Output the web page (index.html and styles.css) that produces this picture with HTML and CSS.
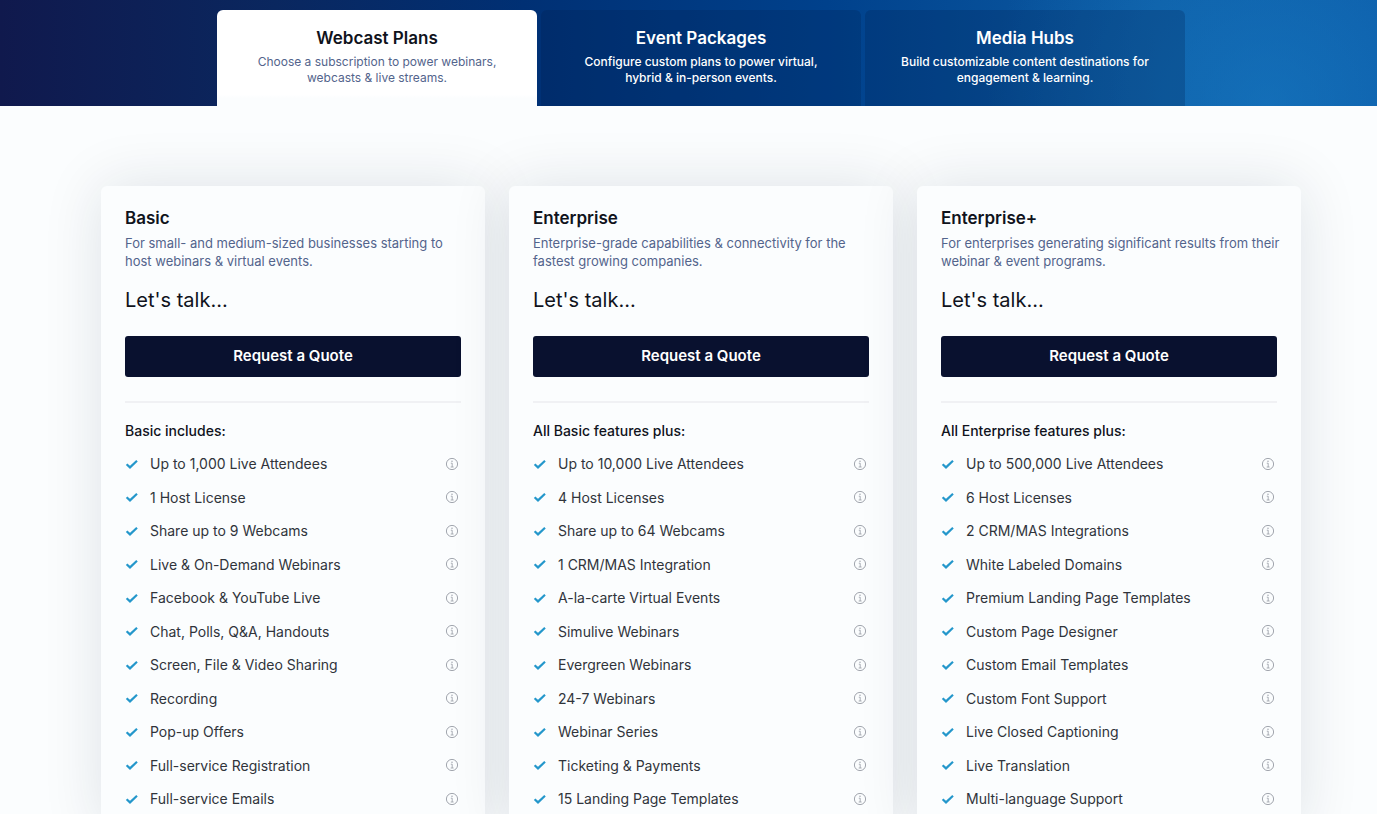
FILE: index.html
```html
<!DOCTYPE html>
<html lang="en">
<head>
<meta charset="utf-8">
<meta name="viewport" content="width=device-width, initial-scale=1">
<title>Webcast Plans</title>
<link rel="stylesheet" href="styles.css">
</head>
<body>
<svg class="sprite" aria-hidden="true">
  <symbol id="check" viewBox="0 0 14 14"><path d="M1.6 7.2 5 10.4 12 3.8" fill="none" stroke="currentColor" stroke-width="2.2"/></symbol>
  <symbol id="info" viewBox="0 0 14 14"><circle cx="7" cy="7" r="5.6" fill="none" stroke="currentColor" stroke-width=".9"/><path d="M5.8 6.2H7.2V10M5.7 10H8.6" fill="none" stroke="currentColor" stroke-width=".8"/><circle cx="7" cy="4.2" r=".7" fill="currentColor"/></symbol>
</svg>
<header class="hero">
  <nav class="tabs" aria-label="Plan types">
    <a class="tab tab-active" href="#webcast" aria-current="page"><span class="tab-title">Webcast Plans</span><span class="tab-text">Choose a subscription to power webinars,<br>webcasts &amp; live streams.</span></a>
    <a class="tab" href="#events"><span class="tab-title">Event Packages</span><span class="tab-text">Configure custom plans to power virtual,<br>hybrid &amp; in-person events.</span></a>
    <a class="tab" href="#hubs"><span class="tab-title">Media Hubs</span><span class="tab-text">Build customizable content destinations for<br>engagement &amp; learning.</span></a>
  </nav>
</header>
<main class="plans" id="webcast"></main>
<script src="plans.js"></script>
</body>
</html>
```
FILE: styles.css
```css
* { box-sizing: border-box; }

body {
  margin: 0;
  min-height: 100vh;
  background: #fbfdfe;
  color: #10131c;
  font-family: Inter, "Liberation Sans", sans-serif;
}

.sprite { display: none; }

.hero {
  padding: 10px 0 0 25px;
  background:
    radial-gradient(circle at 92% 100%, rgba(24, 123, 196, 0.6), rgba(24, 123, 196, 0) 22%),
    linear-gradient(90deg, #10194d 0%, #0a275f 20%, #003074 38%, #00418c 60%, #0d5ca4 84%, #0c5ba7 100%);
}

.tabs {
  display: grid;
  grid-template-columns: repeat(3, minmax(0, 1fr));
  gap: 4px;
  max-width: 968px;
  margin: 0 auto;
}

.tab {
  display: flex;
  flex-direction: column;
  gap: 4px;
  padding: 16px 0 20px;
  border-radius: 6px 6px 0 0;
  background: rgba(0, 30, 80, 0.25);
  color: #fff;
  text-align: center;
  text-decoration: none;
}

.tab-title { font-size: 17px; line-height: 24px; font-weight: 600; }
.tab-text { font-size: 12px; line-height: 16px; font-weight: 500; white-space: nowrap; }

.tab-active { background: linear-gradient(#fff 88%, #fbfdfe 92%); color: #10131c; }
.tab-active .tab-text { color: #53648c; font-weight: 400; }

.plans {
  display: grid;
  grid-template-columns: repeat(3, minmax(0, 1fr));
  gap: 24px;
  max-width: 1225px;
  margin: 80px auto 0;
  padding-left: 25px;
}

.plan {
  padding: 20px 24px;
  border-radius: 6px 6px 0 0;
  background: #fbfdfe;
  box-shadow: 0 0 60px rgba(20, 30, 60, 0.12);
}

.plan-name { margin: 0; font-size: 17px; line-height: 24px; font-weight: 600; }
.plan-text { margin: 4px 0 0; font-size: 13px; line-height: 18px; color: #53648c; white-space: nowrap; }
.plan-price { margin: 15px 0 0; font-size: 20px; line-height: 30px; }

.quote {
  display: block;
  width: 100%;
  height: 41px;
  margin-top: 21px;
  padding: 0 0 2px;
  border: 0;
  border-radius: 3px;
  background: #09112f;
  color: #fff;
  font: 600 15px/24px Inter, "Liberation Sans", sans-serif;
}

.includes {
  margin: 24px 0 0;
  padding-top: 16px;
  border-top: 2px solid #f0f1f4;
  font-size: 14px;
  line-height: 24px;
  font-weight: 500;
}

.features {
  display: grid;
  align-content: space-between;
  height: 358px;
  margin: 9px 0 0;
  padding: 0;
  list-style: none;
  font-size: 14px;
  line-height: 23px;
  color: #30343b;
}

.feature { display: flex; align-items: center; gap: 11px; }
.feature-name { flex: 1; }
.check { width: 14px; height: 14px; color: #2497cb; }

.info {
  display: flex;
  margin-right: 2px;
  padding: 0;
  border: 0;
  background: none;
  color: #979ca5;
}

.info svg { width: 14px; height: 14px; }
```
FILE: plans.js
```js
const plans = [
  {
    name: "Basic",
    text: "For small- and medium-sized businesses starting to<br>host webinars &amp; virtual events.",
    includes: "Basic includes:",
    features: ["Up to 1,000 Live Attendees", "1 Host License", "Share up to 9 Webcams", "Live &amp; On-Demand Webinars", "Facebook &amp; YouTube Live", "Chat, Polls, Q&amp;A, Handouts", "Screen, File &amp; Video Sharing", "Recording", "Pop-up Offers", "Full-service Registration", "Full-service Emails"]
  },
  {
    name: "Enterprise",
    text: "Enterprise-grade capabilities &amp; connectivity for the<br>fastest growing companies.",
    includes: "All Basic features plus:",
    features: ["Up to 10,000 Live Attendees", "4 Host Licenses", "Share up to 64 Webcams", "1 CRM/MAS Integration", "A-la-carte Virtual Events", "Simulive Webinars", "Evergreen Webinars", "24-7 Webinars", "Webinar Series", "Ticketing &amp; Payments", "15 Landing Page Templates"]
  },
  {
    name: "Enterprise+",
    text: "For enterprises generating significant results from their<br>webinar &amp; event programs.",
    includes: "All Enterprise features plus:",
    features: ["Up to 500,000 Live Attendees", "6 Host Licenses", "2 CRM/MAS Integrations", "White Labeled Domains", "Premium Landing Page Templates", "Custom Page Designer", "Custom Email Templates", "Custom Font Support", "Live Closed Captioning", "Live Translation", "Multi-language Support"]
  }
];

const feature = name => `
  <li class="feature">
    <svg class="check" aria-hidden="true"><use href="#check"/></svg>
    <span class="feature-name">${name}</span>
    <button class="info" type="button" aria-label="About ${name}"><svg aria-hidden="true"><use href="#info"/></svg></button>
  </li>`;

document.querySelector(".plans").innerHTML = plans.map(plan => `
  <section class="plan">
    <h2 class="plan-name">${plan.name}</h2>
    <p class="plan-text">${plan.text}</p>
    <p class="plan-price">Let's talk...</p>
    <button class="quote" type="button">Request a Quote</button>
    <h3 class="includes">${plan.includes}</h3>
    <ul class="features">${plan.features.map(feature).join("")}</ul>
  </section>`).join("");
```
